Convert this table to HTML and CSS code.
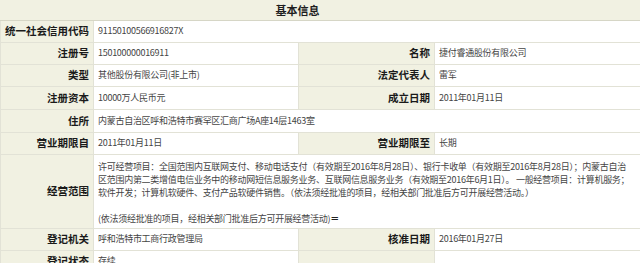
FILE: index.html
```html
<!DOCTYPE html>
<html lang="zh">
<head>
<meta charset="utf-8">
<link rel="stylesheet" href="styles.css">
</head>
<body>
<table class="info">
  <colgroup>
    <col class="c-label1">
    <col class="c-value1">
    <col class="c-label2">
    <col class="c-value2">
  </colgroup>
  <tr class="r-head"><th colspan="4" class="head">基本信息</th></tr>
  <tr class="r22"><th class="lab">统一社会信用代码</th><td colspan="3" class="val">91150100566916827X</td></tr>
  <tr class="r22"><th class="lab">注册号</th><td class="val">150100000016911</td><th class="lab">名称</th><td class="val">捷付睿通股份有限公司</td></tr>
  <tr class="r22"><th class="lab">类型</th><td class="val">其他股份有限公司(非上市)</td><th class="lab">法定代表人</th><td class="val">雷军</td></tr>
  <tr class="r23"><th class="lab">注册资本</th><td class="val">10000万人民币元</td><th class="lab">成立日期</th><td class="val">2011年01月11日</td></tr>
  <tr class="r23"><th class="lab">住所</th><td colspan="3" class="val">内蒙古自治区呼和浩特市赛罕区汇商广场A座14层1463室</td></tr>
  <tr class="r22"><th class="lab">营业期限自</th><td class="val">2011年01月11日</td><th class="lab">营业期限至</th><td class="val">长期</td></tr>
  <tr class="r22"><th class="lab">经营范围</th><td colspan="3" class="val scope">许可经营项目：全国范围内互联网支付、移动电话支付（有效期至2016年8月28日）、银行卡收单（有效期至2016年8月28日）；内蒙古自治<br>区范围内第二类增值电信业务中的移动网短信息服务业务、互联网信息服务业务（有效期至2016年6月1日）。 一般经营项目：计算机服务；<br>软件开发；计算机软硬件、支付产品软硬件销售。（依法须经批准的项目，经相关部门批准后方可开展经营活动。）<br>&nbsp;<br>(依法须经批准的项目，经相关部门批准后方可开展经营活动)<b class="eq">＝</b></td></tr>
  <tr class="r22"><th class="lab">登记机关</th><td class="val">呼和浩特市工商行政管理局</td><th class="lab">核准日期</th><td class="val">2016年01月27日</td></tr>
  <tr class="r22"><th class="lab">登记状态</th><td class="val">存续</td><th class="lab"></th><td class="val"></td></tr>
</table>
</body>
</html>
```

FILE: styles.css
```css
html, body {
  margin: 0;
  padding: 0;
  background: #ffffff;
}

body {
  font-family: "Noto Sans CJK SC", "Noto Sans", sans-serif;
  overflow: hidden;
}

.info {
  width: 640px;
  border-collapse: collapse;
  table-layout: fixed;
  background: #f1f1e2;
}

.c-label1 { width: 93px; }
.c-value1 { width: 205px; }
.c-label2 { width: 136px; }
.c-value2 { width: 206px; }

.info th,
.info td {
  border: 1px solid #e2e2d6;
  padding: 0;
  overflow: hidden;
  white-space: nowrap;
}

.r-head { height: 20px; }
.r22 { height: 22px; }
.r23 { height: 23px; }

.info .head {
  text-align: center;
  padding-right: 46px;
  font-size: 11px;
  font-weight: bold;
  color: #1e1e1e;
  border-top: none;
  border-left: none;
  border-right: none;
  border-bottom: 1px solid #d6d6c6;
  line-height: 18px;
}

.info .lab {
  text-align: right;
  padding-right: 4px;
  font-size: 10.5px;
  font-weight: bold;
  color: #1a1a1a;
  line-height: 14px;
}

.info .val {
  background: #ffffff;
  text-align: left;
  padding-left: 4px;
  font-size: 9px;
  letter-spacing: -0.28px;
  color: #444444;
  line-height: 14px;
}

.info .scope {
  line-height: 13px;
  padding-top: 5px;
  padding-bottom: 3px;
}

.eq {
  font-weight: bold;
  color: #222;
}
```
